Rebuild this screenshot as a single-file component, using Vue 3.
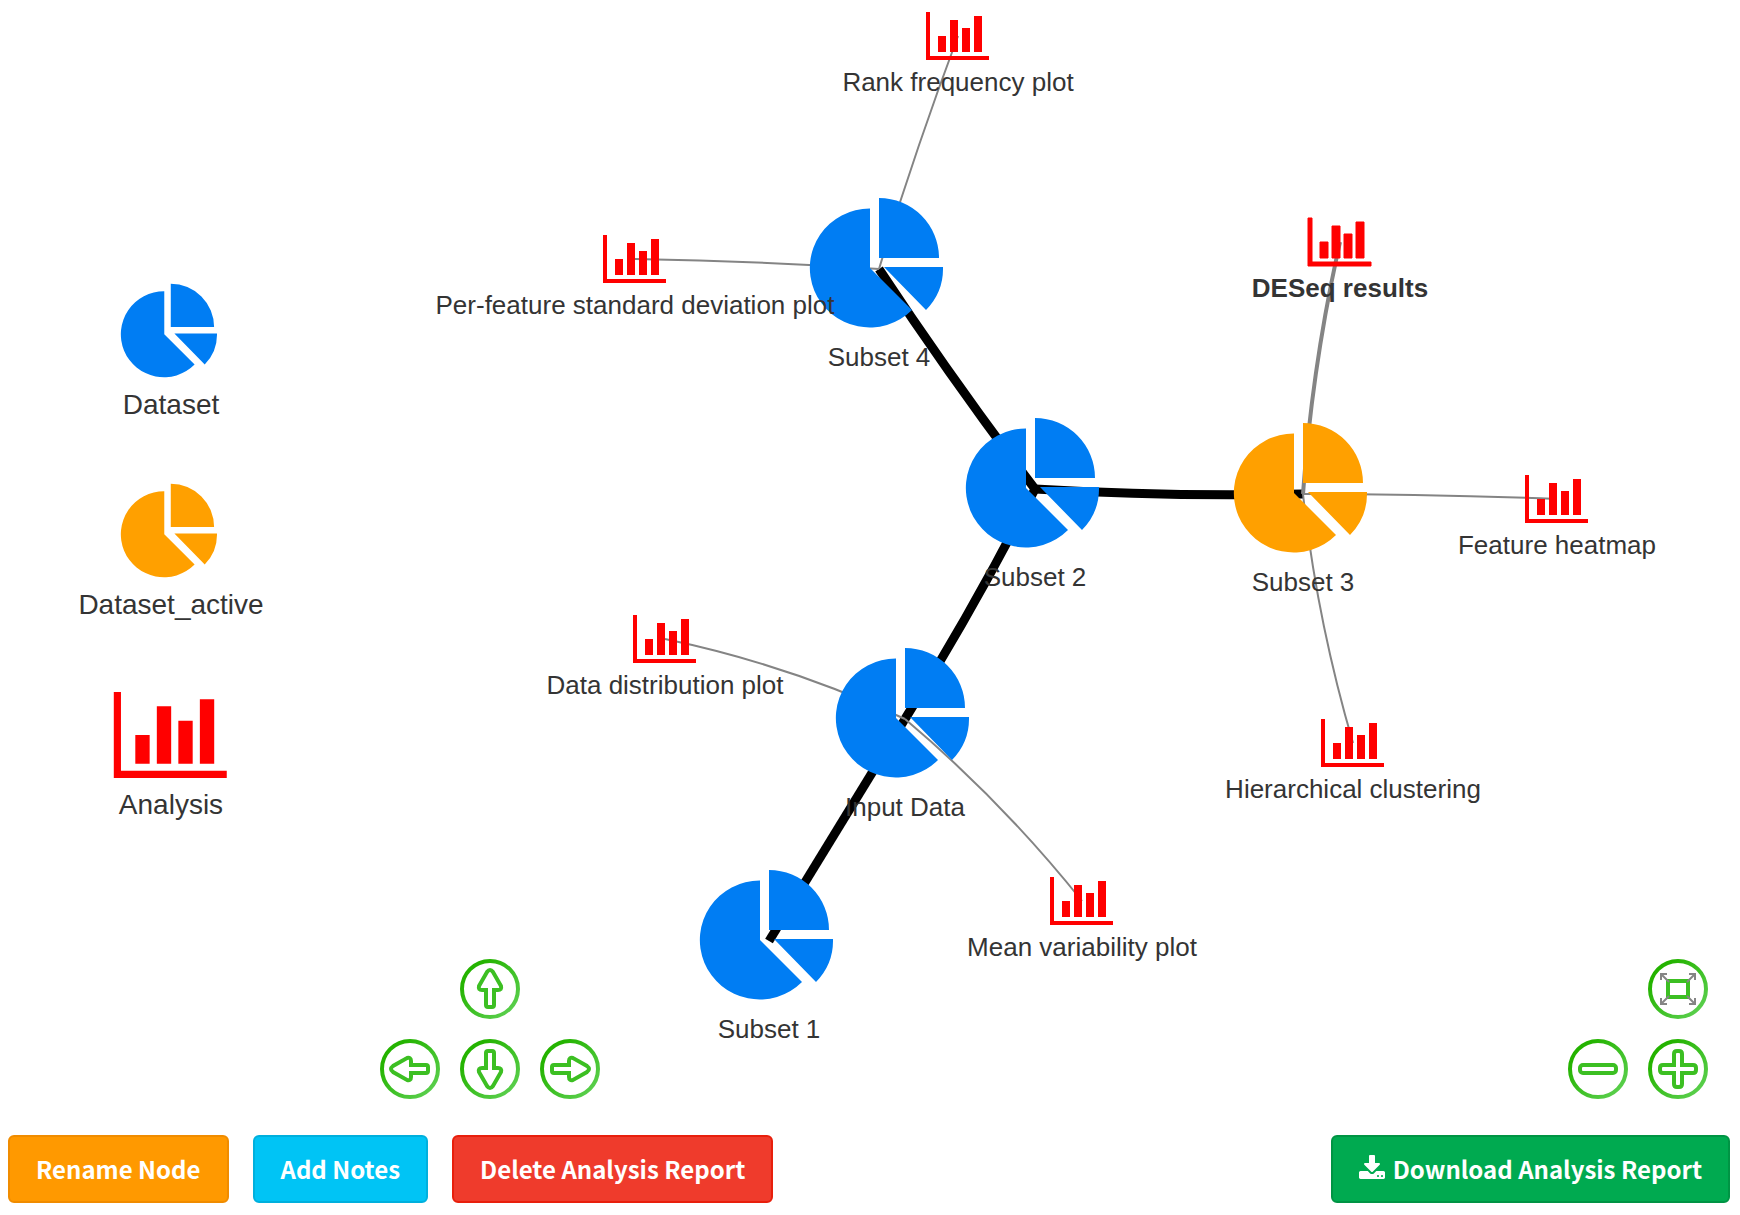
<script setup>
const PIE = [
  'M-9 -1 V-60.5 A59.8 59.5 0 1 0 33 41 Z',
  'M0 -71 A60 60 0 0 1 60 -11 H0 Z',
  'M5 -2 H64 A59 59 0 0 1 47 41 Z',
].join(' ')

const BARS =
  'M-32 -24 h4 v44 h59 v4 h-63 Z M-20 0 h8 v16 h-8 Z M-8 -16 h8 v32 h-8 Z M4 -8 h8 v24 h-8 Z M16 -20 h8 v36 h-8 Z'

const legend = [
  { label: 'Dataset', kind: 'dataset' },
  { label: 'Dataset_active', kind: 'active' },
  { label: 'Analysis', kind: 'analysis' },
]

const nodes = [
  { id: 's4', label: 'Subset 4', x: 879, y: 269, kind: 'dataset' },
  { id: 's2', label: 'Subset 2', x: 1035, y: 489, kind: 'dataset' },
  { id: 's3', label: 'Subset 3', x: 1303, y: 494, kind: 'active' },
  { id: 'in', label: 'Input Data', x: 905, y: 719, kind: 'dataset' },
  { id: 's1', label: 'Subset 1', x: 769, y: 941, kind: 'dataset' },
  { id: 'rank', label: 'Rank frequency plot', x: 958, y: 36, kind: 'analysis' },
  { id: 'sd', label: 'Per-feature standard deviation plot', x: 635, y: 259, kind: 'analysis' },
  { id: 'deseq', label: 'DESeq results', x: 1340, y: 242, kind: 'analysis', selected: true },
  { id: 'heat', label: 'Feature heatmap', x: 1557, y: 499, kind: 'analysis' },
  { id: 'hier', label: 'Hierarchical clustering', x: 1353, y: 743, kind: 'analysis' },
  { id: 'dist', label: 'Data distribution plot', x: 665, y: 639, kind: 'analysis' },
  { id: 'mean', label: 'Mean variability plot', x: 1082, y: 901, kind: 'analysis' },
]

const byId = Object.fromEntries(nodes.map((n) => [n.id, n]))

// via: control point of the curved edge
const edges = [
  { from: 's4', to: 's2', via: [953, 381], cls: 'trunk' },
  { from: 's2', to: 's3', via: [1169, 497], cls: 'trunk' },
  { from: 's2', to: 'in', via: [975, 607], cls: 'trunk' },
  { from: 'in', to: 's1', via: [837, 830], cls: 'trunk' },
  { from: 'rank', to: 's4', via: [915, 151], cls: 'leaf' },
  { from: 'sd', to: 's4', via: [757, 261], cls: 'leaf' },
  { from: 'dist', to: 'in', via: [790, 665], cls: 'leaf' },
  { from: 'mean', to: 'in', via: [1002, 801], cls: 'leaf' },
  { from: 'heat', to: 's3', via: [1430, 494], cls: 'leaf' },
  { from: 'hier', to: 's3', via: [1317, 620], cls: 'leaf' },
  { from: 'deseq', to: 's3', via: [1312, 367], cls: 'leaf chosen' },
]

const curve = (e) => {
  const a = byId[e.from]
  const b = byId[e.to]
  return `M${a.x} ${a.y} Q${e.via[0]} ${e.via[1]} ${b.x} ${b.y}`
}
const shape = (kind) => (kind === 'analysis' ? BARS : PIE)
const labelY = (n) => n.y + (n.kind === 'analysis' ? 55 : 97)

const pan = [
  { name: 'up', turn: 0 },
  { name: 'left', turn: 270 },
  { name: 'down', turn: 180 },
  { name: 'right', turn: 90 },
]
</script>

<template>
  <main class="page">
    <div class="workspace">
      <aside class="legend">
        <figure v-for="item in legend" :key="item.label" class="legend-item">
          <svg
            class="legend-icon"
            :viewBox="item.kind === 'analysis' ? '-33 -29 66 58' : '-80 -72 160 144'"
            aria-hidden="true"
          >
            <path :class="item.kind" :d="shape(item.kind)" />
          </svg>
          <figcaption>{{ item.label }}</figcaption>
        </figure>
      </aside>

      <section class="network">
        <svg class="graph" viewBox="342 0 1398 1120" role="img" aria-label="Analysis network">
          <path v-for="e in edges" :key="e.from + e.to" :class="['edge', e.cls]" :d="curve(e)" />
          <path
            v-for="n in nodes"
            :key="n.id"
            :class="[n.kind, { picked: n.selected }]"
            :d="shape(n.kind)"
            :transform="`translate(${n.x} ${n.y})`"
          />
          <text
            v-for="n in nodes"
            :key="n.id + 'label'"
            :class="['label', { strong: n.selected }]"
            :x="n.x"
            :y="labelY(n)"
          >{{ n.label }}</text>
        </svg>

        <div class="pan">
          <button v-for="p in pan" :key="p.name" type="button" :class="['nav', p.name]" :aria-label="'Move ' + p.name">
            <svg viewBox="0 0 60 60" aria-hidden="true">
              <defs>
                <linearGradient :id="'ring-' + p.name" x1="0" y1="0" x2="1" y2="1">
                  <stop offset="0.2" stop-color="#24b300" />
                  <stop offset="1" stop-color="#62d358" />
                </linearGradient>
              </defs>
              <circle cx="30" cy="30" r="28" :stroke="`url(#ring-${p.name})`" />
              <path
                class="glyph"
                :transform="`rotate(${p.turn} 30 30)`"
                d="M27 13 Q30 9 33 13 L41 27 Q42 31 38 31 H34 V46 Q34 48 32 48 H28 Q26 48 26 46 V31 H22 Q18 31 19 27 Z"
              />
            </svg>
          </button>
        </div>

        <div class="zoom">
          <button type="button" class="nav fit" aria-label="Fit to view">
            <svg viewBox="0 0 60 60" aria-hidden="true">
              <circle cx="30" cy="30" r="28" stroke="url(#ring-up)" />
              <rect class="glyph" x="20" y="22" width="20" height="16" />
              <path
                class="corner"
                d="M21 23 L14 16 M13 21 V15 H19 M39 23 L46 16 M47 21 V15 H41 M21 37 L14 44 M13 39 V45 H19 M39 37 L46 44 M47 39 V45 H41"
              />
            </svg>
          </button>
          <button type="button" class="nav out" aria-label="Zoom out">
            <svg viewBox="0 0 60 60" aria-hidden="true">
              <circle cx="30" cy="30" r="28" stroke="url(#ring-up)" />
              <rect class="glyph" x="12" y="26" width="36" height="8" rx="3" />
            </svg>
          </button>
          <button type="button" class="nav in" aria-label="Zoom in">
            <svg viewBox="0 0 60 60" aria-hidden="true">
              <circle cx="30" cy="30" r="28" stroke="url(#ring-up)" />
              <path
                class="glyph"
                d="M29 12 H31 Q34 12 34 15 V26 H45 Q48 26 48 29 V31 Q48 34 45 34 H34 V45 Q34 48 31 48 H29 Q26 48 26 45 V34 H15 Q12 34 12 31 V29 Q12 26 15 26 H26 V15 Q26 12 29 12 Z"
              />
            </svg>
          </button>
        </div>
      </section>
    </div>

    <footer class="actions">
      <button type="button" class="btn rename">Rename Node</button>
      <button type="button" class="btn notes">Add Notes</button>
      <button type="button" class="btn delete">Delete Analysis Report</button>
      <button type="button" class="btn download">
        <svg viewBox="0 0 1664 1536" aria-hidden="true">
          <path
            d="M1280 1344q0-26-19-45t-45-19-45 19-19 45 19 45 45 19 45-19 19-45zm256 0q0-26-19-45t-45-19-45 19-19 45 19 45 45 19 45-19 19-45zm128-224v320q0 40-28 68t-68 28h-1472q-40 0-68-28t-28-68v-320q0-40 28-68t68-28h465l135 136q58 56 136 56t136-56l136-136h464q40 0 68 28t28 68zm-325-569q17 41-14 70l-448 448q-18 19-45 19t-45-19l-448-448q-31-29-14-70 17-39 59-39h256v-448q0-26 19-45t45-19h256q26 0 45 19t19 45v448h256q42 0 59 39z"
          />
        </svg>
        Download Analysis Report
      </button>
    </footer>
  </main>
</template>

<style>
body {
  margin: 0;
  background: #fff;
}
</style>

<style scoped>
.page {
  font-family: 'Liberation Sans', Arial, sans-serif;
  color: #343434;
}

.workspace {
  display: flex;
}

.legend {
  flex: none;
  box-sizing: border-box;
  width: 342px;
  padding-top: 283px;
  display: flex;
  flex-direction: column;
  gap: 60px;
}

.legend-item {
  margin: 0;
  display: flex;
  flex-direction: column;
  align-items: center;
  font-size: 28px;
  line-height: 36px;
}

.legend-icon {
  height: 104px;
}

.dataset {
  fill: #007df3;
}

.active {
  fill: #ffa000;
}

.analysis {
  fill: #f00;
}

.picked {
  stroke: #f00;
  stroke-width: 1px;
}

.network {
  flex: 1;
  min-width: 0;
  position: relative;
}

.graph {
  display: block;
  width: 100%;
}

.edge {
  fill: none;
}

.trunk {
  stroke: #000;
  stroke-width: 9px;
}

.leaf {
  stroke: #848484;
  stroke-width: 2px;
}

.chosen {
  stroke-width: 4px;
}

.label {
  font-size: 26px;
  text-anchor: middle;
  fill: #343434;
}

.strong {
  font-weight: 700;
}

.pan,
.zoom {
  position: absolute;
  bottom: 21px;
  display: grid;
  gap: 20px;
}

.pan {
  left: 38px;
  grid-template-areas: '. up .' 'left down right';
}

.zoom {
  right: 32px;
  grid-template-areas: '. fit' 'out in';
}

.up { grid-area: up; }
.left { grid-area: left; }
.down { grid-area: down; }
.right { grid-area: right; }
.fit { grid-area: fit; }
.out { grid-area: out; }
.in { grid-area: in; }

.nav {
  width: 60px;
  height: 60px;
  padding: 0;
  border: 0;
  border-radius: 50%;
  background: none;
  cursor: pointer;
}

.nav svg {
  display: block;
  fill: none;
}

.nav circle {
  stroke-width: 4px;
}

.glyph {
  stroke: #3cbf22;
  stroke-width: 4px;
}

.corner {
  stroke: #858585;
  stroke-width: 2px;
}

.actions {
  display: flex;
  gap: 24px;
  padding: 15px 10px 12px 8px;
}

.btn {
  box-sizing: border-box;
  height: 68px;
  padding: 0 26px 2px;
  border: 2px solid;
  border-radius: 6px;
  display: flex;
  align-items: center;
  gap: 8px;
  font-family: 'Noto Sans CJK SC', sans-serif;
  font-size: 24px;
  font-weight: 700;
  white-space: nowrap;
  color: #fff;
  cursor: pointer;
}

.btn svg {
  width: 26px;
  height: 24px;
  margin-bottom: 2px;
  fill: #fff;
}

.rename {
  background: #ff9900;
  border-color: #f08c00;
}

.notes {
  background: #00c4f5;
  border-color: #00b0dd;
}

.delete {
  background: #ef3b2c;
  border-color: #e81f0c;
}

.download {
  margin-left: auto;
  background: #00aa50;
  border-color: #009444;
}
</style>
